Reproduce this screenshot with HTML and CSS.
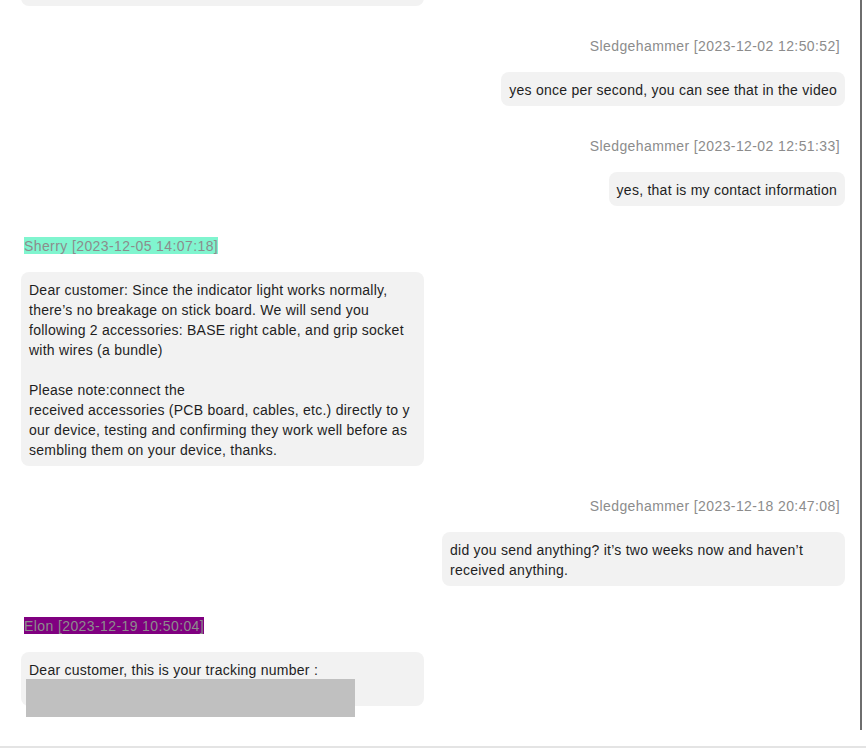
FILE: index.html
```html
<!DOCTYPE html>
<html lang="en">
<head>
<meta charset="utf-8">
<title>Chat</title>
<link rel="stylesheet" href="styles.css">
</head>
<body>
<div class="viewport">
  <div class="chat">
    <div class="msg left first">
      <div class="bubble wide filler"></div>
    </div>

    <div class="msg right">
      <div class="who">Sledgehammer [2023-12-02 12:50:52]</div>
      <div class="bubble">yes once per second, you can see that in the video</div>
    </div>

    <div class="msg right">
      <div class="who">Sledgehammer [2023-12-02 12:51:33]</div>
      <div class="bubble">yes, that is my contact information</div>
    </div>

    <div class="msg left">
      <div class="who"><span class="tag tag-sherry">Sherry [2023-12-05 14:07:18]</span></div>
      <div class="bubble wide">Dear customer: Since the indicator light works normally,<br>there’s no breakage on stick board. We will send you<br>following 2 accessories: BASE right cable, and grip socket<br>with wires (a bundle)<br><br>Please note:connect the<br>received accessories (PCB board, cables, etc.) directly to y<br>our device, testing and confirming they work well before as<br>sembling them on your device, thanks.</div>
    </div>

    <div class="msg right">
      <div class="who">Sledgehammer [2023-12-18 20:47:08]</div>
      <div class="bubble wide">did you send anything? it’s two weeks now and haven’t<br>received anything.</div>
    </div>

    <div class="msg left">
      <div class="who"><span class="tag tag-elon">Elon [2023-12-19 10:50:04]</span></div>
      <div class="bubble wide tracking">Dear customer, this is your tracking number :<br>&nbsp;<div class="redact"></div></div>
    </div>
  </div>
  <div class="scrollbar"></div>
</div>
<div class="bottom-line"></div>
</body>
</html>
```

FILE: styles.css
```css
html, body {
  margin: 0;
  padding: 0;
  background: #ffffff;
}

body {
  width: 866px;
  height: 750px;
  overflow: hidden;
  font-family: "Liberation Sans", Arial, Helvetica, sans-serif;
  font-size: 14px;
  line-height: 20px;
  color: #1e1e1e;
}

.viewport {
  position: relative;
  height: 746px;
  overflow: hidden;
}

.chat {
  display: flex;
  flex-direction: column;
  gap: 30px;
  padding: 0 21px;
}

.msg {
  display: flex;
  flex-direction: column;
  gap: 16px;
}

.msg.left {
  align-items: flex-start;
}

.msg.right {
  align-items: flex-end;
}

.first {
  margin-top: -74px;
}

.who {
  color: #8c8c8c;
  white-space: nowrap;
  letter-spacing: 0.4px;
}

.right .who {
  padding-right: 5px;
}

.left .who {
  padding-left: 3px;
}

.tag {
  padding: 1px 0 0;
}

.tag-sherry {
  background: #80f5cf;
}

.tag-elon {
  background: #800080;
}

.bubble {
  box-sizing: border-box;
  max-width: 403px;
  padding: 8px 8px 6px;
  background: #f2f2f2;
  border-radius: 8px;
  white-space: nowrap;
  letter-spacing: 0.25px;
}

.bubble.wide {
  width: 403px;
}

.filler {
  height: 80px;
}

.tracking {
  position: relative;
}

.redact {
  position: absolute;
  left: 5px;
  top: 27px;
  width: 329px;
  height: 38px;
  background: #c0c0c0;
}

.scrollbar {
  position: absolute;
  top: 0;
  right: 4px;
  width: 2px;
  height: 730px;
  background: #6e6e6e;
}

.bottom-line {
  height: 2px;
  background: #e4e4e4;
}
```
